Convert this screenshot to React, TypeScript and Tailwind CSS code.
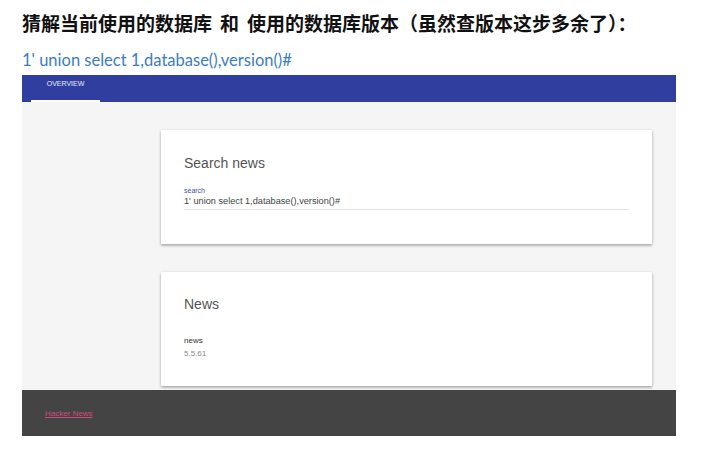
import React from 'react';

function Card({ children }: { children: React.ReactNode }) {
  return (
    <div className="h-[114px] bg-white px-[23px] shadow-[0_1px_3px_rgba(0,0,0,0.25),0_2px_2px_rgba(0,0,0,0.12)]">
      {children}
    </div>
  );
}

export default function App() {
  return (
    <div className="w-[716px] h-[460px] bg-white pl-[22px] overflow-hidden">
      {/* Blog heading */}
      <div className="pt-[9px] h-[46px] text-[19px] leading-[28px] font-bold text-[#111] [font-family:'Noto_Sans_CJK_SC',sans-serif]">
        猜解当前使用的数据库<span className="inline-block w-[8px]" />和<span className="inline-block w-[8px]" />使用的数据库版本（虽然查版本这步多余了）：
      </div>
      <div className="h-[29px] text-[16.5px] leading-[28px] text-[#3b7dc0] [font-family:Lato,sans-serif]">
        1' union select 1,database(),version()#
      </div>

      {/* Embedded screenshot of the page */}
      <div className="w-[654px] [font-family:'Liberation_Sans',Arial,sans-serif]">
        <div className="h-[27px] bg-[#303f9f] pl-[9px] flex items-end">
          <div className="w-[69px] h-full flex flex-col">
            <div className="flex-1 flex items-center justify-center text-[7px] text-white/90 uppercase pb-[6px]">
              Overview
            </div>
            <div className="h-[2px] bg-white" />
          </div>
        </div>

        <div className="bg-[#f5f5f5] pt-[28px] pb-[4px] pl-[139px] pr-[24px] flex flex-col gap-[28px]">
          <Card>
            <div className="pt-[25px] text-[14px] leading-[16px] text-[#555]">Search news</div>
            <div className="pt-[15px] text-[7px] leading-[9px] text-[#3f51b5]">search</div>
            <div className="text-[9.2px] leading-[12px] text-[#444] border-b border-[#e4e4e4] pb-[2px]">
              1' union select 1,database(),version()#
            </div>
          </Card>
          <Card>
            <div className="pt-[24px] text-[14px] leading-[16px] text-[#555]">News</div>
            <div className="pt-[23px] text-[8px] leading-[12px] text-[#333]">news</div>
            <div className="pt-[1px] text-[8px] leading-[12px] text-[#888]">5.5.61</div>
          </Card>
        </div>

        <div className="h-[46px] bg-[#444444] pl-[23px] pt-[2px] flex items-center">
          <a className="text-[8px] text-[#cf4a80] underline">Hacker News</a>
        </div>
      </div>
    </div>
  );
}
